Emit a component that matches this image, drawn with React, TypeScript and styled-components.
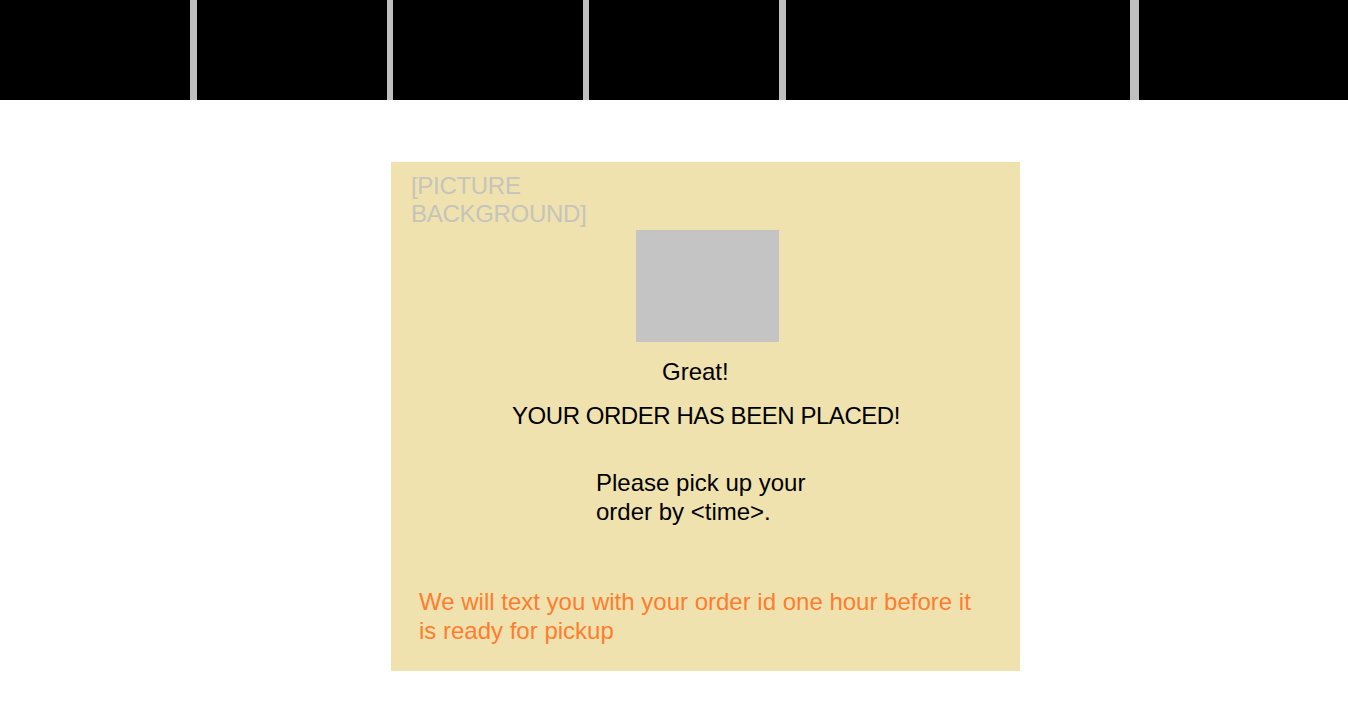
import React from 'react';
import styled, { createGlobalStyle } from 'styled-components';

const GlobalStyle = createGlobalStyle`
  html, body {
    margin: 0;
    padding: 0;
    background: #fff;
    font-family: "Liberation Sans", Arial, sans-serif;
  }
`;

const Page = styled.div`
  width: 1348px;
  min-height: 727px;
  display: flex;
  flex-direction: column;
`;

const TopBar = styled.div`
  display: flex;
  height: 100px;
  background: #c0c0c0;
`;

const Tile = styled.div<{ $w: number; $gap: number }>`
  width: ${p => p.$w}px;
  margin-left: ${p => p.$gap}px;
  background: #000;
  flex-shrink: 0;
`;

const Main = styled.div`
  display: flex;
  padding: 62px 0 0 391px;
`;

const Card = styled.div`
  width: 629px;
  height: 509px;
  box-sizing: border-box;
  background: #efe2af;
  display: flex;
  flex-direction: column;
  padding-top: 10px;
`;

const Label = styled.div`
  margin-left: 20px;
  font-size: 24px;
  line-height: 28px;
  letter-spacing: -0.3px;
  color: #c6c4bb;
  width: 200px;
`;

const Photo = styled.div`
  width: 143px;
  height: 112px;
  margin: 2px 0 0 245px;
  background: #c4c4c4;
`;

const Line = styled.div<{ $left: number; $top: number; $color?: string; $width?: number; $tight?: boolean }>`
  margin: ${p => p.$top}px 0 0 ${p => p.$left}px;
  width: ${p => (p.$width ? `${p.$width}px` : 'auto')};
  font-size: 24px;
  line-height: 29px;
  letter-spacing: ${p => (p.$tight ? '-0.45px' : 'normal')};
  color: ${p => p.$color || '#000'};
`;

const tiles = [
  { w: 190, gap: 0 },
  { w: 190, gap: 7 },
  { w: 190, gap: 6 },
  { w: 190, gap: 6 },
  { w: 344, gap: 7 },
  { w: 209, gap: 9 },
];

const App = () => {
  return (
    <Page>
      <GlobalStyle />
      <TopBar>
        {tiles.map((t, i) => (
          <Tile key={i} $w={t.w} $gap={t.gap} />
        ))}
      </TopBar>
      <Main>
        <Card>
          <Label>[PICTURE BACKGROUND]</Label>
          <Photo />
          <Line $left={271} $top={15}>Great!</Line>
          <Line $left={121} $top={15} $tight>YOUR ORDER HAS BEEN PLACED!</Line>
          <Line $left={205} $top={38} $width={240}>
            Please pick up your order by &lt;time&gt;.
          </Line>
          <Line $left={28} $top={61} $width={570} $color="#ff7d2e">
            We will text you with your order id one hour before it is ready for pickup
          </Line>
        </Card>
      </Main>
    </Page>
  );
};

export default App;
